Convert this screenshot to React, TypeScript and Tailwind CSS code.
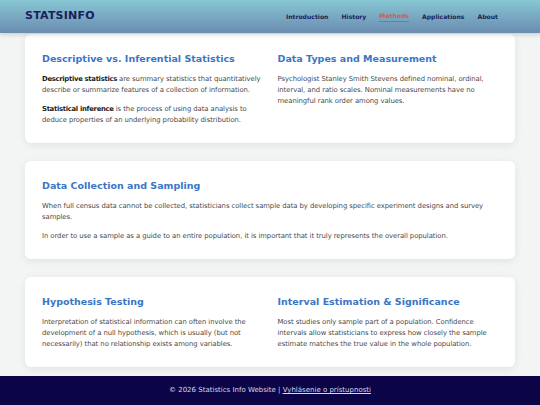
import React from 'react';

const navLinks = ['Introduction', 'History', 'Methods', 'Applications', 'About'];

const Header = () => (
  <header className="sticky top-0 z-10 flex h-[33px] items-center justify-between bg-gradient-to-b from-[#88c7d4] to-[#6a8cb0] pl-[25px] pr-[42px] shadow-[0_2px_4px_rgba(0,0,0,0.15)]">
    <div className="text-[11px] font-extrabold tracking-[0.02em] text-[#1b1d5c]">STATSINFO</div>
    <nav className="flex items-center gap-[13px]">
      {navLinks.map((link) =>
        link === 'Methods' ? (
          <a
            key={link}
            className="border-b-[1.5px] border-[#c8614c] pb-[1px] text-[6.1px] font-semibold text-[#c8614c]"
          >
            {link}
          </a>
        ) : (
          <a key={link} className="text-[6.1px] font-semibold text-[#1b2358]">
            {link}
          </a>
        )
      )}
    </nav>
  </header>
);

const Card = ({ children }: { children: React.ReactNode }) => (
  <section className="rounded-[6px] bg-white px-[17px] py-[17px] shadow-[0_2px_8px_rgba(0,0,0,0.08)]">
    {children}
  </section>
);

const Heading = ({ children }: { children: React.ReactNode }) => (
  <h2 className="mb-[8px] text-[9.5px] leading-[15px] font-bold text-[#3a76c4]">{children}</h2>
);

const Para = ({ children }: { children: React.ReactNode }) => (
  <p className="text-[6.85px] leading-[11px] tracking-[-0.06px] text-[#4a4a4a]">{children}</p>
);

const Term = ({ children }: { children: React.ReactNode }) => (
  <strong className="font-bold tracking-[-0.3px] text-[#222]">{children}</strong>
);

export default function App() {
  return (
    <div className="min-h-screen bg-[#f3f4f4] font-['DejaVu_Sans',sans-serif]">
      <Header />
      <main className="flex flex-col gap-[18px] px-[25px] pt-[1px] pb-[9px]">
        <Card>
          <div className="grid grid-cols-2 gap-[15px]">
            <div>
              <Heading>Descriptive vs. Inferential Statistics</Heading>
              <div className="flex flex-col gap-[8px]">
                <Para>
                  <Term>Descriptive statistics</Term> are summary statistics that quantitatively
                  describe or summarize features of a collection of information.
                </Para>
                <Para>
                  <Term>Statistical inference</Term> is the process of using data analysis to deduce
                  properties of an underlying probability distribution.
                </Para>
              </div>
            </div>
            <div>
              <Heading>Data Types and Measurement</Heading>
              <Para>
                Psychologist Stanley Smith Stevens defined nominal, ordinal, interval, and ratio scales.
                Nominal measurements have no meaningful rank order among values.
              </Para>
            </div>
          </div>
        </Card>

        <Card>
          <Heading>Data Collection and Sampling</Heading>
          <div className="flex flex-col gap-[8px]">
            <Para>
              When full census data cannot be collected, statisticians collect sample data by developing
              specific experiment designs and survey samples.
            </Para>
            <Para>
              In order to use a sample as a guide to an entire population, it is important that it truly
              represents the overall population.
            </Para>
          </div>
        </Card>

        <Card>
          <div className="grid grid-cols-2 gap-[15px]">
            <div>
              <Heading>Hypothesis Testing</Heading>
              <Para>
                Interpretation of statistical information can often involve the development of a null
                hypothesis, which is usually (but not necessarily) that no relationship exists among
                variables.
              </Para>
            </div>
            <div>
              <Heading>Interval Estimation &amp; Significance</Heading>
              <Para>
                Most studies only sample part of a population. Confidence intervals allow statisticians to
                express how closely the sample estimate matches the true value in the whole population.
              </Para>
            </div>
          </div>
        </Card>
      </main>

      <footer className="bg-[#0b0548] pt-[9px] pb-[20px] text-center text-[7px] text-[#d8d8e8]">
        © 2026 Statistics Info Website |{' '}
        <a className="underline">Vyhlásenie o prístupnosti</a>
      </footer>
    </div>
  );
}
